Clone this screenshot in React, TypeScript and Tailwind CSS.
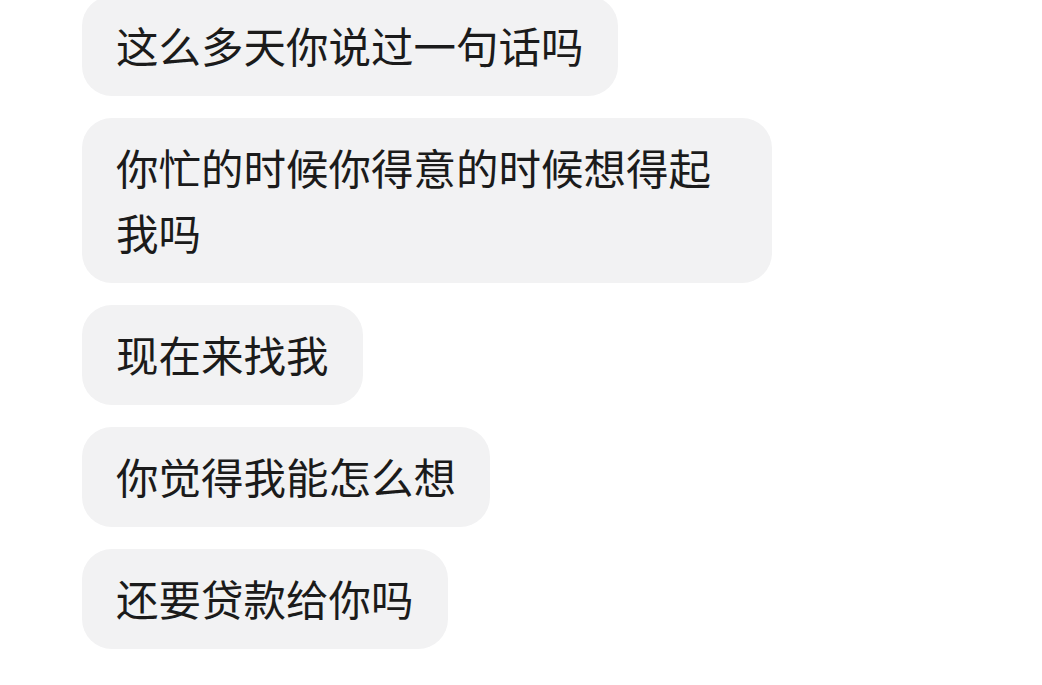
const messages = [
  "这么多天你说过一句话吗",
  "你忙的时候你得意的时候想得起我吗",
  "现在来找我",
  "你觉得我能怎么想",
  "还要贷款给你吗",
];

const Bubble = ({ text }: { text: string }) => {
  return (
    <div className="max-w-[690px] self-start rounded-[30px] bg-[#f2f2f3] px-[34px] pt-[15.5px] pb-[19.5px] text-[42.5px] leading-[65px] text-[#1b1b1b]">
      {text}
    </div>
  );
};

export default function App() {
  return (
    <div
      className="h-[685px] w-[1042px] overflow-hidden bg-white"
      style={{ fontFamily: '"Noto Sans CJK SC", "Noto Sans", sans-serif' }}
    >
      <div className="-mt-1 flex flex-col gap-[22px] pl-[82px]">
        {messages.map((m) => (
          <Bubble key={m} text={m} />
        ))}
      </div>
    </div>
  );
}
